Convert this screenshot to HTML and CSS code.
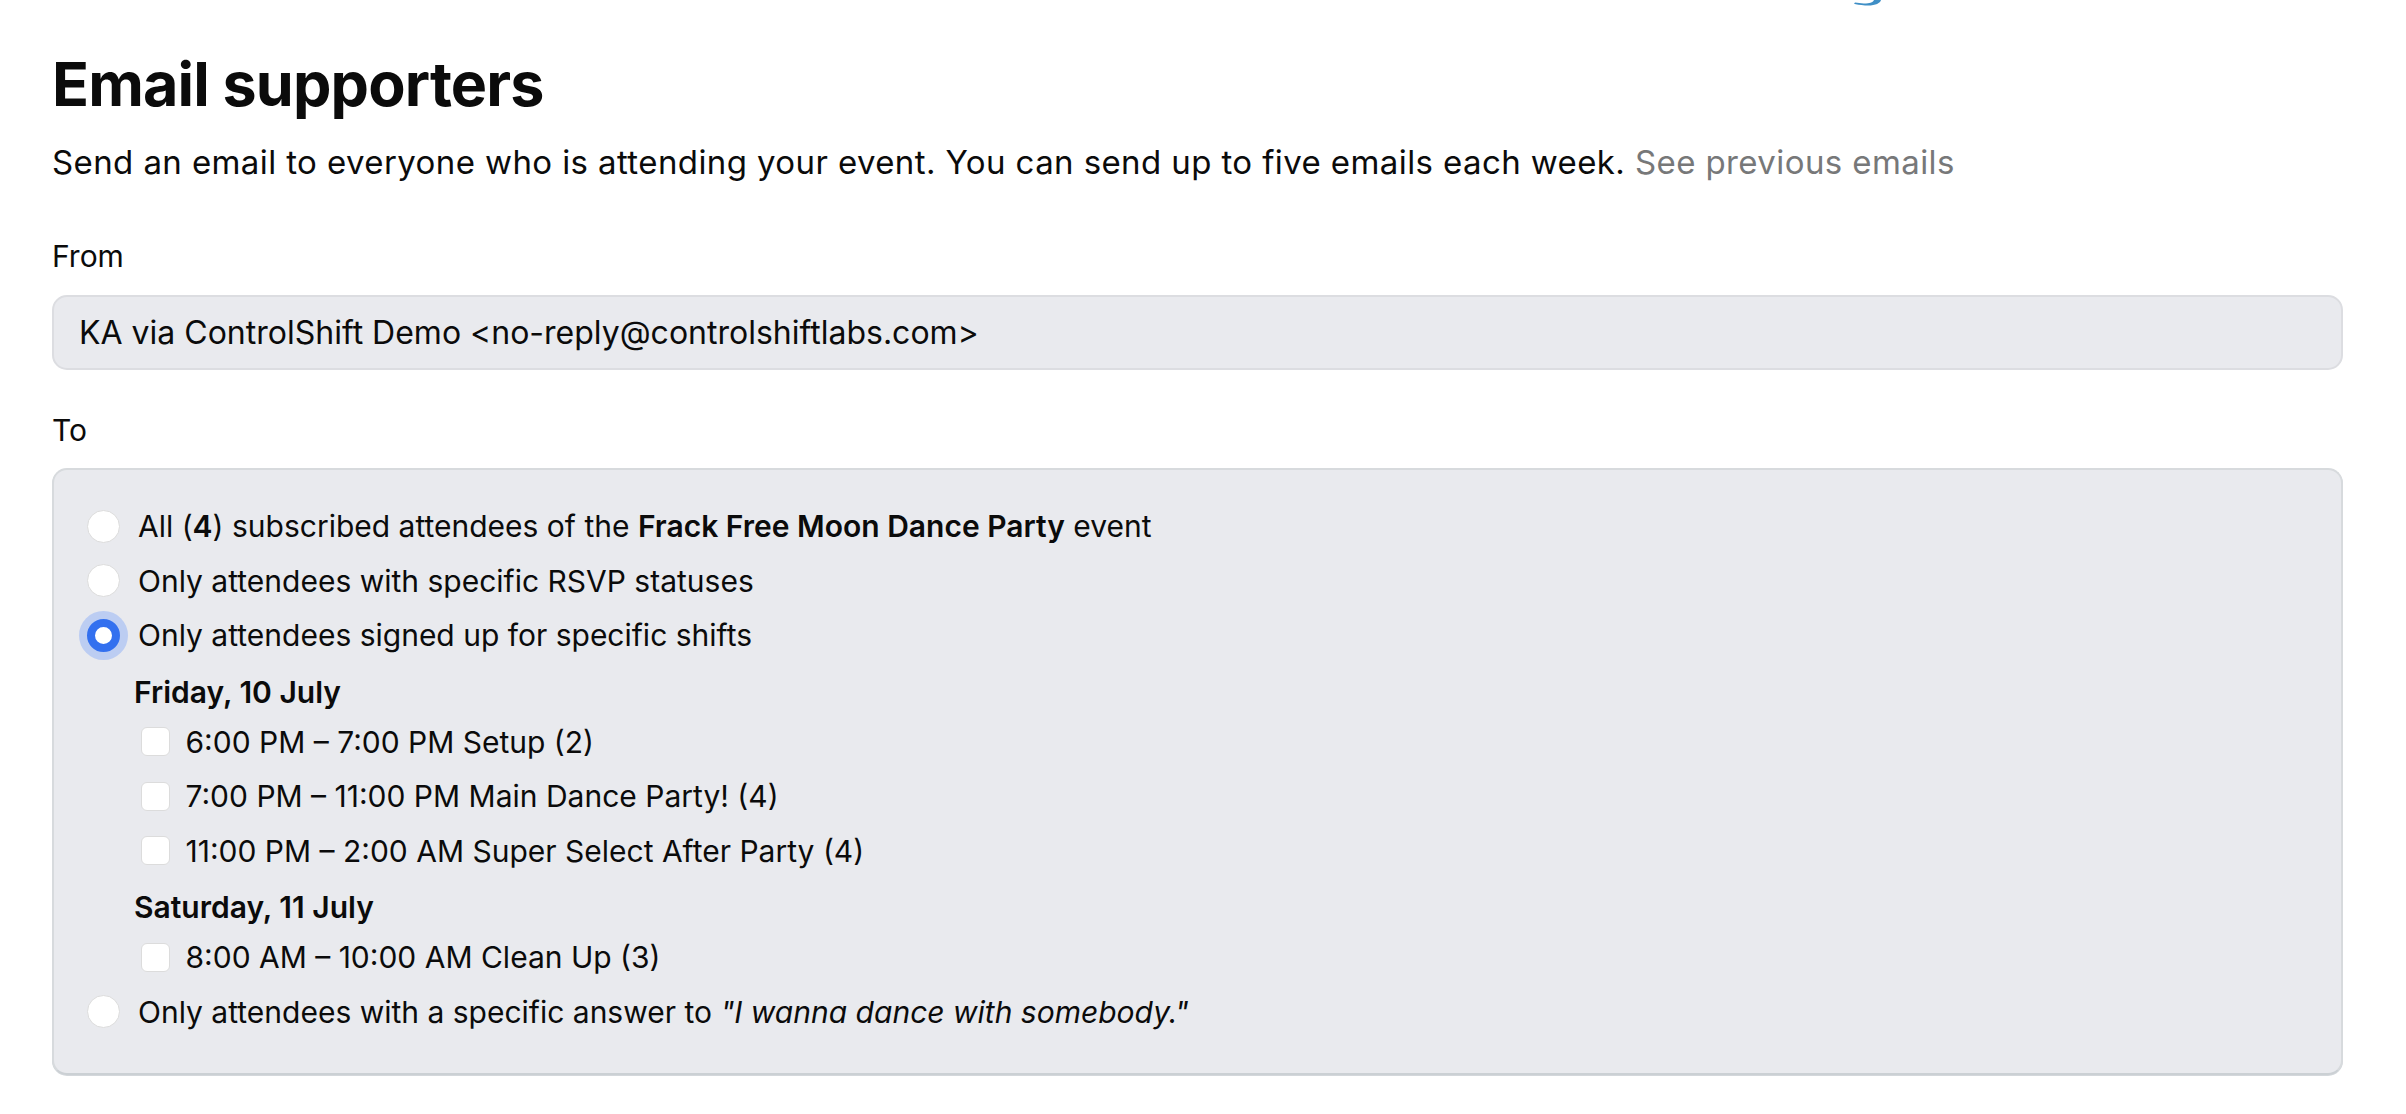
FILE: index.html
```html
<!DOCTYPE html>
<html lang="en">
<head>
<meta charset="utf-8">
<title>Email supporters</title>
<link rel="stylesheet" href="styles.css">
</head>
<body>
<header class="topbar">
  <svg class="logo-tail" width="32" height="6" viewBox="0 0 32 6" aria-hidden="true">
    <path d="M28 0 C27 3.5 22 6 12 5.4 C7 5.1 3 4.6 1 3.8 L2 2.6 C6 3.4 11 3.6 15 3.2 C19 2.8 20.5 1.6 21 0 Z" fill="#3f8fc6"/>
  </svg>
</header>
<main class="page">
  <h1 class="title">Email supporters</h1>
  <p class="lead">Send an email to everyone who is attending your event. You can send up to five emails each week. <a class="muted-link" href="#">See previous emails</a></p>

  <div class="field">
    <div class="field-label">From</div>
    <div class="input">KA via ControlShift Demo &lt;no-reply@controlshiftlabs.com&gt;</div>
  </div>

  <div class="field">
    <div class="field-label">To</div>
    <div class="panel">
      <div class="options">
        <label class="opt"><span class="radio"></span><span>All (<b>4</b>) subscribed attendees of the <b>Frack Free Moon Dance Party</b> event</span></label>
        <label class="opt"><span class="radio"></span><span>Only attendees with specific RSVP statuses</span></label>
        <label class="opt"><span class="radio checked"></span><span>Only attendees signed up for specific shifts</span></label>
        <div class="shifts">
          <div class="day">Friday, 10 July</div>
          <label class="chk"><span class="box"></span><span>6:00 PM – 7:00 PM Setup (2)</span></label>
          <label class="chk"><span class="box"></span><span>7:00 PM – 11:00 PM Main Dance Party! (4)</span></label>
          <label class="chk"><span class="box"></span><span>11:00 PM – 2:00 AM Super Select After Party (4)</span></label>
          <div class="day">Saturday, 11 July</div>
          <label class="chk"><span class="box"></span><span>8:00 AM – 10:00 AM Clean Up (3)</span></label>
        </div>
        <label class="opt"><span class="radio"></span><span>Only attendees with a specific answer to <i>"I wanna dance with somebody."</i></span></label>
      </div>
    </div>
  </div>
</main>
</body>
</html>
```
FILE: styles.css
```css
* { box-sizing: border-box; }

html, body {
  margin: 0;
  padding: 0;
  background: #ffffff;
}

body {
  font-family: Inter, "Noto Sans", "Liberation Sans", sans-serif;
  color: #0b0b0b;
}

.topbar {
  display: flex;
  height: 6px;
}

.logo-tail {
  display: block;
  margin-left: 1853px;
}

.page {
  padding: 40px 63px 40px 52px;
}

.title {
  margin: 0;
  font-size: 61px;
  line-height: 76px;
  font-weight: 700;
  letter-spacing: -0.85px;
}

.lead {
  margin: 20px 0 0;
  font-size: 33px;
  line-height: 40px;
  font-weight: 400;
  letter-spacing: 0.4px;
}

.muted-link {
  color: #777879;
  text-decoration: none;
}

.field {
  margin-top: 56px;
}

.field + .field {
  margin-top: 42px;
}

.field-label {
  font-size: 30px;
  line-height: 36px;
  margin-bottom: 20.5px;
}

.input {
  height: 75px;
  display: flex;
  align-items: center;
  padding-left: 25px;
  background: #e9eaee;
  border: 2px solid #dcdde1;
  border-radius: 15px;
  font-size: 32px;
}

.panel {
  background: #e9eaee;
  border: 2px solid #d7dadd;
  border-bottom-color: #cbd0d4;
  border-radius: 15px;
  padding: 38px 32px 43.5px 32.5px;
  box-shadow: 0 1px 0 #d3d7db;
}

.options {
  display: flex;
  flex-direction: column;
  gap: 18.5px;
  font-size: 30px;
}

.opt, .chk {
  display: flex;
  align-items: center;
  height: 36px;
  white-space: nowrap;
}

.opt b, .day {
  font-weight: 600;
}

.radio {
  flex: none;
  width: 33px;
  height: 33px;
  border-radius: 50%;
  background: #ffffff;
  border: 1.5px solid #dcdcdc;
  margin-right: 18.5px;
}

.radio.checked {
  background: #ffffff;
  border: 8.5px solid #3370ef;
  box-shadow: 0 0 0 8px #bccdf2;
}

.shifts {
  display: flex;
  flex-direction: column;
  gap: 18.5px;
}

.day {
  height: 36px;
  line-height: 36px;
  padding-left: 47.5px;
  margin-top: 2px;
  margin-bottom: -4.5px;
}

.chk {
  padding-left: 54px;
}

.box {
  flex: none;
  width: 29px;
  height: 29px;
  background: #ffffff;
  border: 1.5px solid #dcdcdc;
  border-radius: 6px;
  margin-right: 16px;
}
```
